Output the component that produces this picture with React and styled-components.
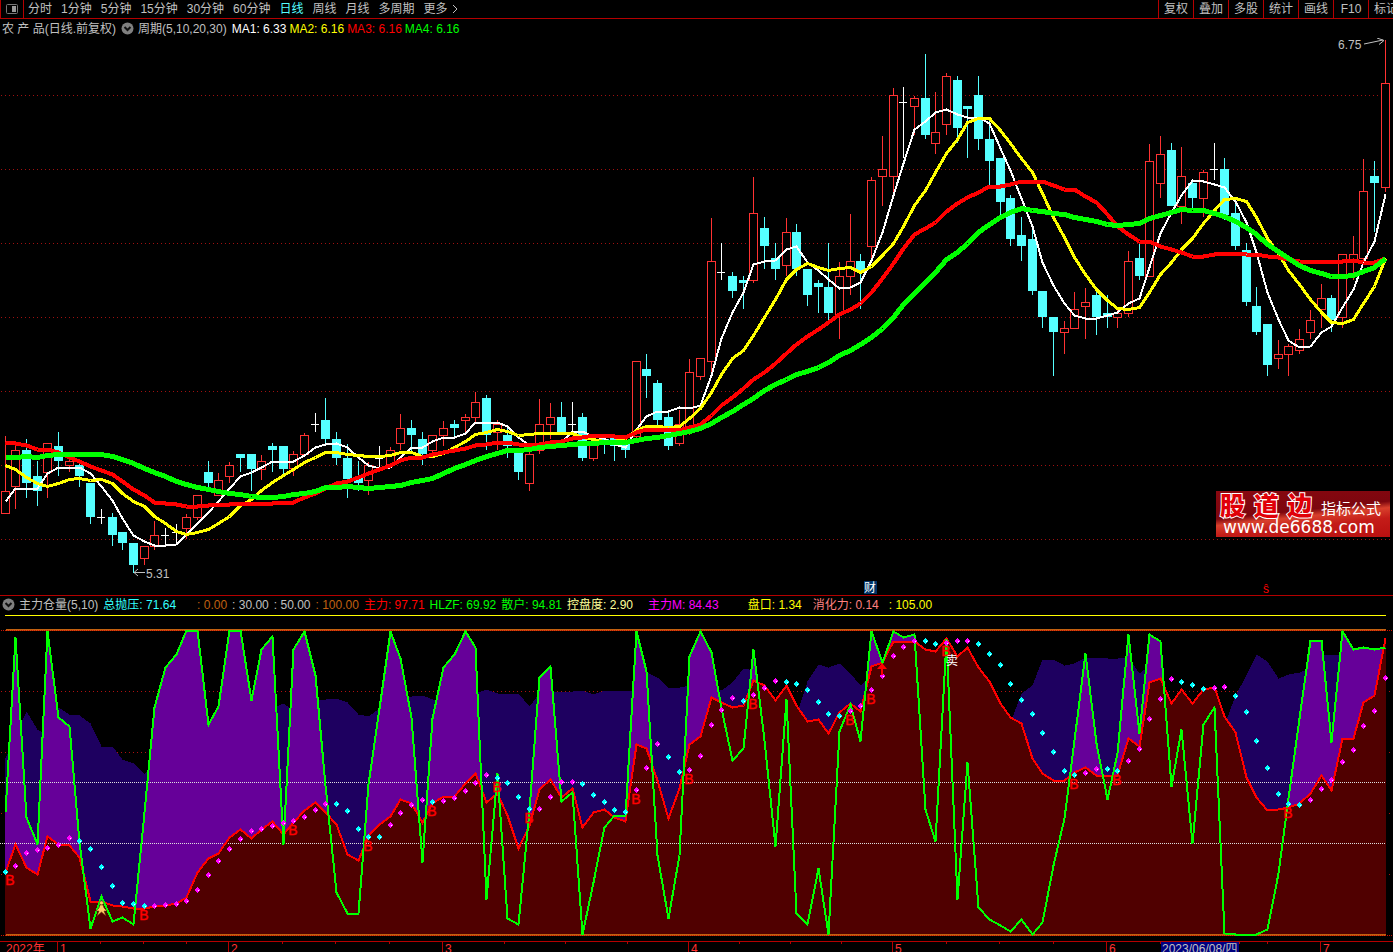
//! default
import React from "react";

//! styles
import styled, { createGlobalStyle } from "styled-components";

const GlobalStyle = createGlobalStyle`
  * {
    box-sizing: border-box;
  }
  body {
    margin: 0;
    background: #000;
    overflow: hidden;
  }
  svg text {
    font-family: "Liberation Sans", "Noto Sans CJK SC", sans-serif;
  }
`;

const Page = styled.div`
  display: flex;
  flex-direction: column;
  height: 100vh;
  overflow: hidden;
  background: #000;
  color: #c0c0c0;
  font-family: "Liberation Sans", "Noto Sans CJK SC", sans-serif;
  font-size: 12px;
  line-height: 16px;
`;

const Toolbar = styled.header`
  display: flex;
  justify-content: space-between;
  flex: none;
  height: 19px;
  border-bottom: 1px solid #b40000;
  border-left: 1px solid #b40000;
`;

const Periods = styled.nav`
  display: flex;
  align-items: center;
  gap: 9px;
  min-width: 0;
  overflow: hidden;
`;

const LayoutButton = styled.button`
  display: flex;
  align-items: center;
  justify-content: center;
  flex: none;
  width: 23px;
  height: 18px;
  margin-right: -5px;
  padding: 0;
  border: 0;
  border-right: 1px solid #b40000;
  background: none;
`;

const PeriodButton = styled.button`
  flex: none;
  display: flex;
  align-items: center;
  gap: 4px;
  padding: 0;
  border: 0;
  background: none;
  color: ${(props) => (props.$active ? "#55ffff" : "#c0c0c0")};
  font: inherit;
`;

const Tools = styled.nav`
  display: grid;
  grid-auto-flow: column;
  grid-auto-columns: 35px;
  flex: none;
  width: 235px;
  overflow: hidden;
`;

const ToolButton = styled.button`
  padding: 0;
  border: 0;
  border-left: 1px solid #b40000;
  background: none;
  color: #c0c0c0;
  font: inherit;
  white-space: nowrap;
`;

const Panel = styled.section`
  position: relative;
  flex: none;
  border-top: ${(props) => (props.$divided ? "1px solid #b40000" : "0")};
`;

const Legend = styled.div`
  display: flex;
  align-items: center;
  gap: 3px;
  height: ${(props) => (props.$dense ? "17px" : "19px")};
  padding-left: ${(props) => (props.$dense ? "0" : "2px")};
  overflow: hidden;
`;

const LegendItem = styled.span`
  flex: none;
  margin-left: ${(props) => props.$space || 0}px;
  color: ${(props) => props.$color || "#c0c0c0"};
  white-space: pre;
`;

const ToggleButton = styled.button`
  display: flex;
  flex: none;
  margin: 0 1px 0 2px;
  padding: 0;
  border: 0;
  background: none;
`;

const Chart = styled.svg`
  display: block;
  width: 100%;
  height: auto;
`;

const Wordmark = styled.a`
  position: absolute;
  right: 3px;
  bottom: 58px;
  width: 174px;
  height: 46px;
  padding: 0 9px 0 4px;
  background: linear-gradient(
    174deg,
    #8a0810 0%,
    #7c060e 44%,
    #d8402c 54%,
    #c41c18 70%,
    #b81010 100%
  );
  color: #fff;
  text-decoration: none;
`;

const WordmarkTop = styled.div`
  display: flex;
  justify-content: space-between;
  align-items: flex-end;
  height: 27px;
`;

const WordmarkName = styled.span`
  color: #e00008;
  font-family: "Noto Sans CJK SC", sans-serif;
  font-size: 25px;
  font-weight: 900;
  line-height: 27px;
  -webkit-text-stroke: 2px #fff;
  paint-order: stroke fill;
`;

const WordmarkNote = styled.span`
  font-size: 15px;
  line-height: 18px;
`;

const WordmarkUrl = styled.div`
  padding-left: 3px;
  font-family: "DejaVu Sans", sans-serif;
  font-size: 17px;
  line-height: 18px;
`;

const PERIODS = [
  "分时",
  "1分钟",
  "5分钟",
  "15分钟",
  "30分钟",
  "60分钟",
  "日线",
  "周线",
  "月线",
  "多周期",
];

const TOOLS = ["复权", "叠加", "多股", "统计", "画线", "F10", "标记"];

const MA_LEGEND = [
  { text: "MA1: 6.33", color: "#ffffff", space: 2 },
  { text: "MA2: 6.16", color: "#ffff00" },
  { text: "MA3: 6.16", color: "#ff0000" },
  { text: "MA4: 6.16", color: "#00ff00" },
];

const INDICATOR_LEGEND = [
  { text: "总抛压: 71.64", color: "#33ffff" },
  { text: ": 0.00", color: "#c06010", space: 18 },
  { text: ": 30.00" },
  { text: ": 50.00" },
  { text: ": 100.00", color: "#c06010" },
  { text: "主力: 97.71", color: "#ff0000" },
  { text: "HLZF: 69.92", color: "#00ff00" },
  { text: "散户: 94.81", color: "#00ff00" },
  { text: "控盘度: 2.90", color: "#ffff99" },
  { text: "主力M: 84.43", color: "#ff00ff", space: 12 },
  { text: "盘口: 1.34", color: "#ffff00", space: 26 },
  { text: "消化力: 0.14", color: "#ff8080", space: 8 },
  { text: ": 105.00", color: "#ffff00", space: 7 },
];

// [kind, high, body top, body bottom, low], u = rising, d = falling, x = doji
const CANDLES = [
  ["u", 436, 491, 514, 514], ["u", 446, 450, 487, 509], ["d", 439, 450, 483, 498], ["d", 461, 476, 491, 506],
  ["u", 443, 443, 473, 498], ["d", 432, 446, 461, 476], ["u", 458, 461, 466, 472], ["d", 463, 465, 476, 487],
  ["d", 483, 483, 517, 524], ["x", 509, 517, 518, 524], ["d", 513, 517, 535, 546], ["d", 532, 532, 543, 550],
  ["d", 543, 543, 565, 573], ["u", 546, 546, 559, 565], ["u", 521, 535, 547, 550], ["x", 528, 535, 536, 545],
  ["x", 524, 532, 533, 543], ["u", 514, 517, 529, 539], ["u", 495, 495, 518, 520], ["d", 461, 472, 483, 487],
  ["u", 473, 480, 496, 496], ["u", 462, 465, 477, 483], ["d", 454, 454, 458, 472], ["d", 454, 454, 469, 491],
  ["u", 455, 461, 470, 480], ["d", 443, 446, 450, 472], ["d", 446, 446, 469, 474], ["u", 451, 454, 469, 476],
  ["u", 433, 435, 455, 455], ["x", 413, 424, 425, 432], ["d", 398, 420, 439, 443], ["d", 432, 439, 458, 465],
  ["d", 444, 458, 479, 498], ["d", 461, 477, 483, 491], ["u", 462, 465, 481, 495], ["x", 446, 458, 459, 468],
  ["u", 447, 450, 465, 465], ["u", 414, 428, 444, 450], ["d", 420, 428, 435, 452], ["d", 432, 439, 454, 465],
  ["u", 435, 435, 451, 458], ["u", 421, 428, 436, 446], ["d", 420, 424, 428, 439], ["u", 414, 417, 421, 432],
  ["u", 392, 402, 418, 422], ["d", 395, 398, 435, 450], ["u", 420, 424, 433, 450], ["d", 425, 435, 446, 458],
  ["d", 450, 452, 472, 480], ["u", 452, 454, 484, 491], ["u", 399, 424, 451, 454], ["u", 403, 417, 425, 439],
  ["d", 402, 417, 432, 432], ["x", 402, 424, 425, 432], ["d", 413, 417, 458, 461], ["u", 443, 443, 459, 461],
  ["d", 439, 439, 445, 454], ["d", 438, 438, 446, 461], ["d", 443, 443, 450, 458], ["u", 361, 361, 437, 442],
  ["d", 354, 369, 376, 398], ["d", 380, 383, 420, 427], ["d", 413, 417, 446, 450], ["u", 410, 424, 444, 446],
  ["u", 359, 372, 433, 435], ["u", 358, 358, 377, 380], ["u", 218, 261, 362, 375], ["x", 243, 272, 273, 280],
  ["d", 272, 276, 291, 298], ["d", 276, 280, 283, 309], ["u", 177, 213, 281, 283], ["d", 217, 228, 246, 269],
  ["d", 243, 258, 269, 280], ["u", 218, 232, 266, 276], ["d", 224, 232, 269, 276], ["d", 269, 269, 295, 306],
  ["d", 280, 283, 287, 313], ["d", 243, 287, 313, 320], ["u", 262, 276, 315, 339], ["u", 214, 261, 277, 295],
  ["d", 254, 261, 271, 309], ["u", 177, 180, 247, 260], ["u", 136, 169, 177, 206], ["u", 88, 95, 177, 193],
  ["x", 87, 102, 103, 158], ["u", 96, 98, 107, 135], ["d", 54, 98, 135, 139], ["u", 92, 132, 144, 154],
  ["u", 73, 76, 125, 135], ["d", 76, 80, 128, 143], ["d", 106, 106, 109, 158], ["d", 76, 95, 139, 150],
  ["d", 120, 139, 161, 185], ["d", 158, 158, 202, 220], ["d", 195, 198, 239, 246], ["d", 217, 235, 246, 261],
  ["d", 227, 239, 291, 295], ["d", 291, 291, 317, 328], ["d", 317, 317, 332, 376], ["u", 321, 328, 333, 354],
  ["u", 292, 309, 329, 329], ["u", 288, 302, 307, 339], ["d", 288, 295, 317, 335], ["d", 295, 313, 317, 328],
  ["u", 310, 313, 318, 328], ["u", 251, 261, 314, 317], ["d", 243, 258, 276, 280], ["u", 144, 161, 277, 277],
  ["u", 136, 154, 184, 198], ["d", 143, 150, 206, 206], ["u", 147, 176, 207, 224], ["d", 180, 183, 198, 208],
  ["u", 170, 172, 199, 217], ["x", 143, 169, 170, 180], ["d", 158, 169, 215, 220], ["d", 200, 213, 246, 250],
  ["d", 243, 250, 302, 306], ["d", 287, 306, 332, 335], ["d", 324, 324, 365, 376], ["u", 340, 354, 359, 369],
  ["u", 344, 346, 355, 376], ["u", 329, 339, 351, 354], ["u", 310, 320, 333, 339], ["u", 284, 298, 310, 328],
  ["d", 295, 298, 320, 332], ["u", 254, 254, 318, 328], ["u", 236, 254, 262, 280], ["u", 159, 191, 259, 260],
  ["d", 161, 176, 183, 232], ["u", 40, 83, 188, 192],
];

const MA1 = [
  501, 488, 488, 488, 473, 467, 467, 467, 473, 486, 500, 518, 535, 541, 545, 545, 544, 534, 523, 512,
  501, 488, 476, 472, 467, 461, 461, 461, 455, 447, 444, 443, 447, 457, 465, 468, 467, 457, 447, 447,
  441, 437, 437, 433, 422, 422, 422, 426, 437, 445, 447, 445, 442, 431, 431, 436, 438, 444, 447, 429,
  416, 411, 411, 407, 408, 405, 375, 338, 312, 292, 264, 261, 260, 249, 246, 262, 270, 279, 288, 287,
  282, 260, 232, 195, 163, 129, 121, 112, 109, 114, 117, 117, 123, 148, 170, 198, 226, 262, 285, 303,
  315, 318, 318, 315, 312, 303, 298, 267, 233, 212, 195, 180, 181, 184, 187, 201, 222, 252, 292, 319,
  340, 347, 346, 332, 326, 307, 289, 262, 241, 194,
];

const MA2 = [
  465, 469, 477, 483, 486, 483, 479, 478, 480, 479, 483, 493, 501, 506, 516, 523, 531, 534, 532, 529,
  523, 516, 505, 499, 490, 482, 475, 469, 462, 457, 452, 452, 454, 455, 456, 456, 455, 452, 452, 456,
  456, 453, 447, 441, 434, 432, 429, 431, 435, 434, 433, 433, 433, 433, 437, 439, 441, 441, 438, 430,
  426, 426, 427, 426, 418, 408, 392, 374, 358, 350, 335, 317, 299, 279, 269, 263, 267, 270, 268, 267,
  272, 266, 255, 243, 226, 205, 190, 172, 153, 139, 122, 118, 118, 130, 143, 158, 172, 193, 217, 237,
  257, 274, 289, 300, 308, 309, 307, 292, 274, 262, 249, 238, 223, 210, 199, 198, 201, 217, 238, 253,
  270, 284, 299, 312, 322, 323, 319, 303, 286, 258,
];

const MA3 = [
  442, 443, 445, 449, 449, 452, 457, 461, 466, 470, 474, 481, 489, 495, 502, 503, 504, 506, 506, 505,
  504, 504, 503, 503, 503, 503, 502, 502, 497, 493, 488, 483, 481, 477, 473, 469, 465, 460, 457, 457,
  454, 452, 450, 448, 445, 444, 442, 442, 444, 445, 444, 442, 441, 438, 437, 435, 435, 436, 437, 432,
  429, 429, 429, 430, 427, 424, 415, 405, 397, 388, 379, 372, 363, 353, 344, 336, 329, 322, 314, 309,
  303, 292, 278, 263, 248, 234, 228, 222, 211, 203, 197, 192, 186, 186, 184, 181, 181, 181, 185, 189,
  189, 196, 202, 214, 226, 234, 241, 241, 246, 249, 252, 256, 256, 254, 253, 253, 254, 254, 256, 257,
  259, 261, 261, 261, 261, 261, 260, 262, 262, 258,
];

const MA4 = [
  457, 457, 456, 457, 455, 454, 454, 454, 454, 454, 456, 459, 463, 468, 472, 476, 481, 484, 487, 489,
  491, 493, 494, 496, 497, 497, 496, 494, 493, 491, 487, 487, 486, 487, 488, 487, 486, 485, 482, 480,
  478, 473, 468, 464, 460, 456, 453, 450, 450, 449, 447, 446, 445, 444, 443, 443, 442, 442, 442, 440,
  438, 437, 435, 433, 431, 428, 423, 417, 411, 404, 398, 390, 384, 379, 374, 371, 367, 362, 355, 350,
  344, 337, 328, 317, 304, 293, 282, 272, 259, 252, 243, 232, 224, 217, 212, 208, 210, 211, 213, 214,
  217, 219, 221, 224, 225, 224, 223, 218, 215, 212, 209, 210, 210, 213, 216, 221, 227, 234, 244, 251,
  258, 265, 270, 273, 276, 276, 275, 271, 267, 258,
];

const HLZF = [
  812, 637, 817, 844, 631, 717, 726, 842, 928, 896, 921, 917, 924, 812, 707, 667, 654, 630, 630, 724,
  706, 630, 630, 700, 649, 636, 844, 649, 631, 675, 785, 892, 913, 913, 784, 708, 631, 658, 717, 862,
  718, 667, 654, 631, 647, 899, 773, 918, 924, 810, 677, 666, 801, 792, 934, 882, 827, 815, 815, 631,
  671, 855, 918, 855, 656, 631, 652, 708, 760, 748, 649, 740, 846, 699, 913, 924, 868, 934, 731, 704,
  741, 631, 662, 631, 637, 634, 809, 841, 639, 899, 762, 907, 919, 925, 931, 919, 934, 922, 865, 818,
  740, 653, 743, 799, 753, 634, 733, 634, 641, 786, 729, 843, 724, 707, 933, 934, 934, 934, 929, 873,
  798, 718, 640, 640, 742, 631, 649, 647, 649, 647,
];

const MAIN_FORCE = [
  872, 844, 867, 874, 836, 844, 845, 857, 901, 901, 905, 906, 908, 908, 906, 905, 903, 897, 872, 858,
  853, 837, 829, 838, 829, 821, 834, 822, 810, 802, 812, 824, 854, 860, 835, 824, 816, 799, 803, 822,
  803, 796, 796, 783, 773, 802, 793, 815, 848, 825, 789, 779, 797, 788, 827, 812, 809, 817, 821, 744,
  748, 780, 818, 788, 744, 736, 697, 702, 707, 705, 680, 685, 700, 685, 705, 721, 719, 733, 712, 703,
  711, 666, 662, 641, 641, 641, 649, 651, 638, 656, 647, 667, 681, 703, 717, 723, 758, 773, 780, 780,
  772, 767, 775, 775, 775, 738, 746, 682, 678, 703, 689, 703, 689, 687, 716, 732, 777, 797, 810, 809,
  807, 803, 793, 775, 790, 738, 738, 702, 695, 638,
];

const RETAIL = [
  758, 735, 711, 729, 735, 707, 714, 715, 723, 746, 746, 759, 763, 773, 765, 750, 740, 730, 725, 724,
  720, 718, 716, 714, 712, 708, 703, 710, 704, 699, 699, 698, 702, 714, 716, 708, 700, 697, 696, 695,
  699, 700, 698, 696, 693, 689, 693, 693, 693, 706, 693, 691, 691, 691, 690, 694, 690, 690, 690, 690,
  672, 677, 687, 687, 685, 685, 688, 690, 682, 668, 670, 710, 720, 722, 715, 681, 664, 667, 663, 673,
  685, 675, 680, 720, 720, 720, 720, 720, 720, 720, 720, 720, 720, 722, 722, 693, 685, 659, 659, 665,
  663, 657, 657, 658, 658, 657, 673, 665, 715, 725, 725, 725, 725, 725, 725, 695, 675, 654, 661, 678,
  674, 672, 668, 655, 654, 655, 655, 655, 655, 655,
];

const SIGNAL = [
  872, 866, 853, 850, 848, 845, 838, 841, 849, 867, 886, 903, 904, 906, 906, 905, 904, 901, 890, 875,
  861, 849, 839, 831, 829, 826, 823, 821, 817, 810, 804, 804, 811, 829, 837, 837, 825, 813, 805, 800,
  802, 801, 798, 791, 783, 775, 778, 783, 797, 809, 809, 797, 782, 782, 784, 795, 802, 810, 812, 790,
  768, 744, 757, 772, 770, 756, 725, 710, 698, 701, 695, 688, 681, 682, 684, 690, 702, 714, 716, 711,
  706, 690, 676, 656, 647, 641, 641, 644, 643, 641, 641, 644, 654, 665, 684, 700, 714, 733, 752, 771,
  775, 773, 769, 769, 771, 761, 749, 719, 699, 679, 682, 685, 689, 688, 687, 696, 712, 741, 768, 794,
  804, 805, 800, 789, 780, 762, 750, 726, 711, 678,
];

// index ranges where the signal is in its cyan phase
const COOL_RANGES = [
  [0, 0], [7, 13], [31, 35], [40, 40], [46, 49], [54, 58], [62, 63], [69, 69], [73, 78],
  [86, 87], [91, 100], [103, 104], [110, 112], [115, 121],
];

// [bar index, baseline]
const BUY_MARKS = [
  [0, 885], [13, 920], [27, 835], [34, 851], [40, 816], [46, 792], [49, 823], [59, 804],
  [64, 784], [70, 709], [79, 725], [81, 704], [88, 656], [100, 789], [104, 785], [120, 818],
];

const PRICE_GRID = [95, 169, 243, 317, 391, 465, 539];
const INDICATOR_GRID = [691, 752, 813, 874];

const MONTHS = [
  { x: 57, label: "1" },
  { x: 228, label: "2" },
  { x: 442, label: "3" },
  { x: 688, label: "4" },
  { x: 892, label: "5" },
  { x: 1106, label: "6" },
  { x: 1320, label: "7" },
];

const WEEK_TICKS = [
  100, 143, 186, 282, 335, 389, 504, 565, 627, 739, 790, 841, 946, 999, 1053, 1160, 1239, 1267,
];

const barX = (i) => Math.floor(5.015 + i * 10.6992);
const toPoints = (values) => values.map((y, i) => `${barX(i) + 0.5},${y + 0.5}`).join(" ");
const toArea = (values) => `5,935 ${toPoints(values)} 1386,${values[values.length - 1]} 1386,935`;
const isCool = (i) => COOL_RANGES.some(([from, to]) => i >= from && i <= to);

function ToggleIcon() {
  return (
    <svg width="13" height="13" viewBox="0 0 13 13">
      <circle cx="6.5" cy="6.5" r="6" fill="#808080" />
      <path d="M3.5 5 6.5 8 9.5 5" fill="none" stroke="#111" strokeWidth="2" />
    </svg>
  );
}

function Candle({ index, data }) {
  const [kind, high, top, bottom, low] = data;
  const x = barX(index);
  if (kind === "x") {
    return (
      <g fill="#fff">
        <rect x={x} y={high} width="1" height={low - high} />
        <rect x={x - 4} y={top} width="8" height="1" />
      </g>
    );
  }
  if (kind === "d") {
    return (
      <g fill="#55ffff">
        <rect x={x} y={high} width="1" height={low - high} />
        <rect x={x - 4} y={top} width="9" height={bottom - top} />
      </g>
    );
  }
  return (
    <g fill="#ff3232">
      <rect x={x} y={high} width="1" height={low - high} />
      <rect
        x={x - 3.5}
        y={top + 0.5}
        width="8"
        height={bottom - top - 1}
        fill="#000"
        stroke="#ff3232"
      />
    </g>
  );
}

function SignalDot({ index, y }) {
  const x = barX(index);
  return (
    <g>
      <path
        d={`M${x} ${y - 3}h1v1h1v1h1v2h-1v1h-1v1h-1v-1h-1v-1h-1v-2h1v-1h1z`}
        fill={isCool(index) ? "#00ffff" : "#ff00ff"}
      />
      <rect x={x + 1} y={y} width="1" height="1" fill="#fff" />
    </g>
  );
}

function PriceChart() {
  return (
    <Chart viewBox="0 38 1393 557" role="img" aria-label="日线">
      <g shapeRendering="crispEdges" fill="none">
        {PRICE_GRID.map((y) => (
          <path key={y} d={`M1 ${y + 0.5}H1393`} stroke="#a01010" strokeDasharray="1 3" />
        ))}
        {CANDLES.map((data, i) => (
          <Candle key={i} index={i} data={data} />
        ))}
        <polyline points={toPoints(MA1)} stroke="#fff" strokeWidth="2" />
        <polyline points={toPoints(MA2)} stroke="#ff0" strokeWidth="3" />
        <polyline points={toPoints(MA3)} stroke="#f00" strokeWidth="4" />
        <polyline points={toPoints(MA4)} stroke="#0f0" strokeWidth="5" />
      </g>
      <g fill="none" stroke="#c0c0c0">
        <path d="M1364 44 1383 40M1377 38 1384 40.500 1379 44.500" />
        <path d="M134 572.500H145M138 569 134 572.500 138 576" />
        <path d="M1393 26 1391 28.500 1393 31" stroke="#808080" />
      </g>
      <g fill="#c0c0c0" fontSize="12">
        <text x="1338" y="49">6.75</text>
        <text x="146" y="578">5.31</text>
      </g>
      <rect x="864" y="581" width="13" height="13" fill="#003366" />
      <text x="864" y="592" fontSize="12" fill="#fff">财</text>
      <text x="1263" y="593" fontSize="12" fill="#ff0000">ŝ</text>
    </Chart>
  );
}

function IndicatorChart() {
  return (
    <Chart viewBox="0 613 1393 339" role="img" aria-label="主力仓量">
      <g shapeRendering="crispEdges" fill="none">
        {INDICATOR_GRID.map((y) => (
          <path key={y} d={`M1 ${y + 0.5}H1393`} stroke="#b01010" strokeDasharray="1 3" />
        ))}
        <polygon points={toArea(RETAIL)} fill="#1e0060" />
        <polygon points={toArea(HLZF)} fill="#660099" />
        <polygon points={toArea(MAIN_FORCE)} fill="#500000" />
        <path d="M5 615.500H1386" stroke="#ff0" />
        <path d="M6 630H1386M6 935H1386" stroke="#c06010" strokeWidth="2" />
        <path d="M1 630.500H1393M1 935.500H1393" stroke="#d01000" strokeDasharray="1 1" />
        <path d="M0 782.500H1386M0 843.500H1386" stroke="#e0e0e0" strokeDasharray="1 1" />
        <polyline points={toPoints(MAIN_FORCE)} stroke="#f00" strokeWidth="2" />
        <polyline points={toPoints(HLZF)} stroke="#0f0" strokeWidth="2" />
        {SIGNAL.map((y, i) => (
          <SignalDot key={i} index={i} y={y} />
        ))}
        <path d="M0 941.500H1393" stroke="#b40000" />
        {WEEK_TICKS.map((x) => (
          <path key={x} d={`M${x + 0.5} 941V944`} stroke="#b40000" />
        ))}
        {MONTHS.map(({ x }) => (
          <path key={x} d={`M${x + 0.5} 941V952`} stroke="#b40000" />
        ))}
        <rect x="1161" y="942" width="78" height="10" fill="#000080" />
      </g>

      <g fill="#f00" stroke="#f00" strokeWidth="0.400" fontSize="14" textAnchor="middle">
        {BUY_MARKS.map(([i, y]) => (
          <text key={i} x={i ? barX(i) : 10} y={y}>
            B
          </text>
        ))}
      </g>
      <path d="M882 663 877 669H881V675H883V669H887Z" fill="#f00" />
      <text x="946" y="665" fontSize="12" fill="#fff">卖</text>

      <g stroke="#5a3000" strokeWidth="0.500" fill="#ffc864">
        <circle cx="101.500" cy="903" r="2" />
        <path d="M100 905H103L104 908 107 911 104 911 106 916 101.500 912 97 916 99 911 96 911 99 908Z" />
      </g>

      <g fill="#ff3232" fontSize="12">
        <text x="6" y="953">2022年</text>
        {MONTHS.map(({ x, label }) => (
          <text key={x} x={x + 3} y="953">
            {label}
          </text>
        ))}
      </g>
      <text x="1162" y="953" fontSize="12" fill="#c0c0c0">2023/06/08/四</text>
    </Chart>
  );
}

export default function App() {
  return (
    <Page>
      <GlobalStyle />
      <Toolbar>
        <Periods>
          <LayoutButton type="button" aria-label="布局">
            <svg width="12" height="12" viewBox="0 0 12 12">
              <rect x="0.500" y="1.500" width="11" height="9" rx="1" fill="none" stroke="#777" />
              <rect x="6" y="3" width="4" height="6" fill="#999" />
            </svg>
          </LayoutButton>
          {PERIODS.map((label) => (
            <PeriodButton key={label} type="button" $active={label === "日线"}>
              {label}
            </PeriodButton>
          ))}
          <PeriodButton type="button">
            更多
            <svg width="6" height="10" viewBox="0 0 6 10">
              <path d="M1 1 5 5 1 9" fill="none" stroke="#c0c0c0" />
            </svg>
          </PeriodButton>
        </Periods>
        <Tools>
          {TOOLS.map((label) => (
            <ToolButton key={label} type="button">
              {label}
            </ToolButton>
          ))}
        </Tools>
      </Toolbar>

      <Panel>
        <Legend>
          <LegendItem>农 产 品(日线.前复权)</LegendItem>
          <ToggleButton type="button" aria-label="主图指标">
            <ToggleIcon />
          </ToggleButton>
          <LegendItem>周期(5,10,20,30)</LegendItem>
          {MA_LEGEND.map(({ text, color, space }) => (
            <LegendItem key={text} $color={color} $space={space}>
              {text}
            </LegendItem>
          ))}
        </Legend>
        <PriceChart />
        <Wordmark href="#">
          <WordmarkTop>
            <WordmarkName>股</WordmarkName>
            <WordmarkName>道</WordmarkName>
            <WordmarkName>边</WordmarkName>
            <WordmarkNote>指标公式</WordmarkNote>
          </WordmarkTop>
          <WordmarkUrl>www.de6688.com</WordmarkUrl>
        </Wordmark>
      </Panel>

      <Panel $divided>
        <Legend $dense>
          <ToggleButton type="button" aria-label="副图指标">
            <ToggleIcon />
          </ToggleButton>
          <LegendItem>主力仓量(5,10)</LegendItem>
          {INDICATOR_LEGEND.map(({ text, color, space = 2 }) => (
            <LegendItem key={text} $color={color} $space={space}>
              {text}
            </LegendItem>
          ))}
        </Legend>
        <IndicatorChart />
      </Panel>
    </Page>
  );
}
